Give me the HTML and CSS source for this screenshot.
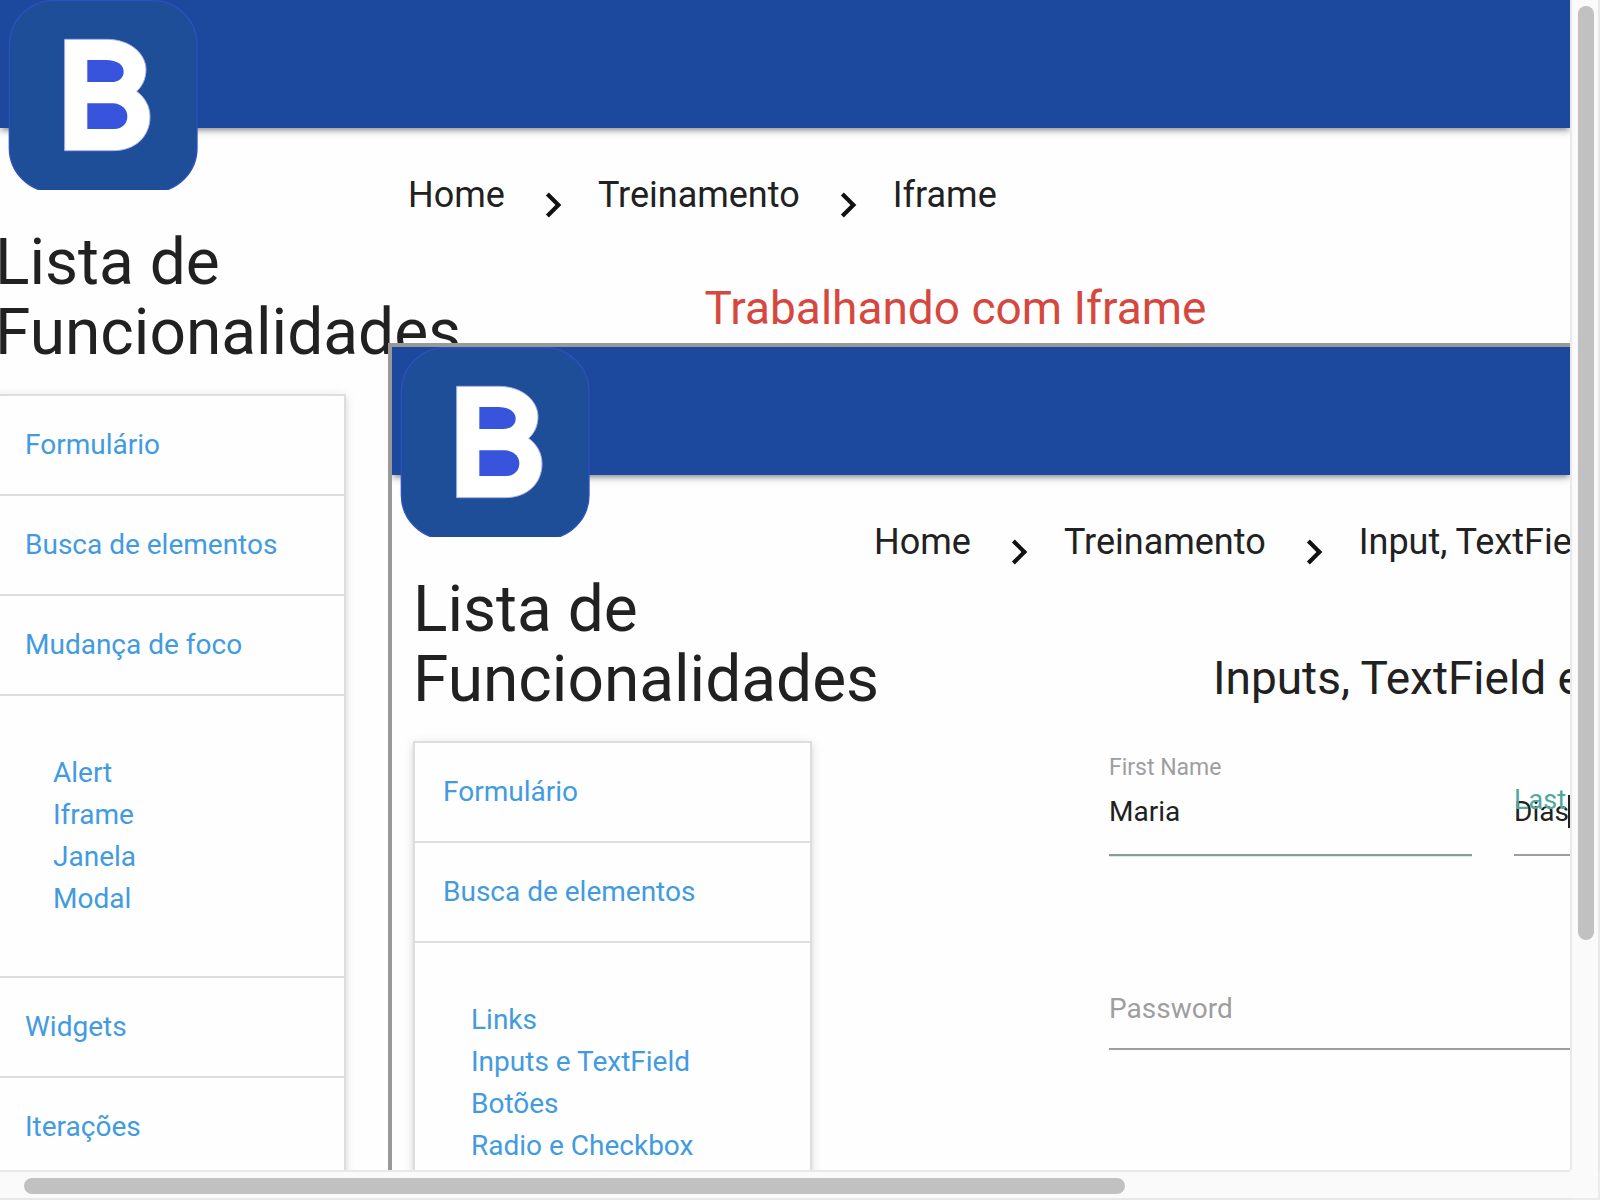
FILE: index.html
```html
<!DOCTYPE html>
<html lang="pt-BR">
<head>
<meta charset="utf-8">
<title>Treinamento - Iframe</title>
<link rel="stylesheet" href="styles.css">
</head>
<body>
<svg class="symbols" aria-hidden="true">
  <symbol id="logo" viewBox="24 0 570 570">
    <rect x="28" y="2" width="563" height="574" rx="132" fill="#1f4e99" stroke="#2c51be" stroke-width="4"/>
    <path d="M194 118H320C395 118 438 165 438 208C438 235 428 258 410 274C434 292 450 318 450 350C450 410 405 452 340 452H194Z" fill="#fff" stroke="#a9b0ee" stroke-width="3"/>
    <path d="M262 180H318C352 180 371 195 371 215C371 233 356 246 335 246H262Z" fill="#3853dc"/>
    <path d="M262 310H338C365 311 382 328 382 349C382 371 367 387 343 387H262Z" fill="#3853dc"/>
  </symbol>
  <symbol id="chevron" viewBox="0 0 24 24">
    <path d="M10 6L8.59 7.41 13.17 12l-4.58 4.59L10 18l6-6z" fill="#111"/>
  </symbol>
</svg>
<div class="window">
  <div class="viewport">
    <header class="topbar"><a href="#" aria-label="Início"><svg class="logo"><use href="#logo"/></svg></a></header>
    <div class="layout layout-outer">
      <aside class="sidebar">
        <h1 class="side-title">Lista de<br>Funcionalidades</h1>
        <ul class="menu">
          <li><a href="#">Formulário</a></li>
          <li><a href="#">Busca de elementos</a></li>
          <li><a href="#">Mudança de foco</a></li>
          <li>
            <ul class="submenu">
              <li><a href="#">Alert</a></li>
              <li><a href="#">Iframe</a></li>
              <li><a href="#">Janela</a></li>
              <li><a href="#">Modal</a></li>
            </ul>
          </li>
          <li><a href="#">Widgets</a></li>
          <li><a href="#">Iterações</a></li>
        </ul>
      </aside>
      <main class="content">
        <nav class="breadcrumb">
          <a href="#">Home</a>
          <svg class="chevron"><use href="#chevron"/></svg>
          <a href="#">Treinamento</a>
          <svg class="chevron"><use href="#chevron"/></svg>
          <a href="#">Iframe</a>
        </nav>
        <h2 class="title title-red">Trabalhando com Iframe</h2>
        <section class="frame">
          <header class="topbar"><a href="#" aria-label="Início"><svg class="logo"><use href="#logo"/></svg></a></header>
          <div class="layout layout-inner">
            <aside class="sidebar">
              <h1 class="side-title">Lista de<br>Funcionalidades</h1>
              <ul class="menu">
                <li><a href="#">Formulário</a></li>
                <li><a href="#">Busca de elementos</a></li>
                <li>
                  <ul class="submenu">
                    <li><a href="#">Links</a></li>
                    <li><a href="#">Inputs e TextField</a></li>
                    <li><a href="#">Botões</a></li>
                    <li><a href="#">Radio e Checkbox</a></li>
                  </ul>
                </li>
              </ul>
            </aside>
            <div class="content">
              <nav class="breadcrumb">
                <a href="#">Home</a>
                <svg class="chevron"><use href="#chevron"/></svg>
                <a href="#">Treinamento</a>
                <svg class="chevron"><use href="#chevron"/></svg>
                <a href="#">Input, TextField</a>
              </nav>
              <form class="form">
                <h2 class="title">Inputs, TextField e</h2>
                <div class="field field-valid">
                  <input id="first" type="text" value="Maria">
                  <label class="raised" for="first">First Name</label>
                </div>
                <div class="field">
                  <input id="last" type="text" value="Dias">
                  <label class="rising" for="last">Last</label>
                  <span class="caret"></span>
                </div>
                <div class="field field-wide">
                  <input id="password" type="password">
                  <label for="password">Password</label>
                </div>
              </form>
            </div>
          </div>
        </section>
      </main>
    </div>
  </div>
  <div class="scroll scroll-y" aria-hidden="true"><div class="thumb"></div></div>
  <div class="scroll scroll-x" aria-hidden="true"><div class="thumb"></div></div>
  <div class="corner"></div>
</div>
</body>
</html>
```
FILE: styles.css
```css
* { box-sizing: border-box; }

body {
  margin: 0;
  font: 28px/42px Roboto, "Liberation Sans", sans-serif;
  color: #212121;
  background: #fefefe;
}

ul { margin: 0; padding: 0; list-style: none; }
a { color: inherit; text-decoration: none; }
.symbols { display: none; }

/* Window with its scroll bars */
.window {
  display: grid;
  grid-template: minmax(0, 1fr) 30px / minmax(0, 1fr) 30px;
  height: 100vh;
  overflow: hidden;
}
.viewport { overflow: hidden; }
.scroll { display: flex; background: #fafafa; border: 0 solid #e8e8e8; }
.scroll-y { flex-direction: column; border-width: 0 2px; padding: 6px 4px 0 6px; }
.scroll-x { border-width: 2px 0; padding: 6px 0 4px 24px; }
.thumb { border-radius: 8px; background: #c1c1c1; }
.scroll-y .thumb { height: 80.2%; }
.scroll-x .thumb { width: 71.2%; }
.corner { background: #fafafa; border: solid #ececec; border-width: 0 2px 2px 0; }

/* Top bar */
.topbar {
  height: 128px;
  padding-left: 8px;
  background: #1c499d;
  box-shadow: 0 4px 4px 0 rgba(0, 0, 0, .14), 0 6px 2px -4px rgba(0, 0, 0, .12), 0 2px 10px 0 rgba(0, 0, 0, .2);
}
.logo { display: block; width: 190px; height: 190px; }

/* Columns */
.layout { display: grid; }
.layout-outer {
  grid-template-columns: 351px minmax(0, 1fr);
  column-gap: 42px;
  margin-left: -5px;
}
.layout-inner {
  grid-template-columns: 399px max-content;
  column-gap: 62px;
  padding-left: 21px;
}

/* Side list */
.side-title {
  margin: 100px 0 26px;
  font-size: 64px;
  line-height: 70px;
  font-weight: 400;
  white-space: nowrap;
}
.menu {
  border: 2px solid #ddd;
  background: #fefefe;
  color: #429be0;
  box-shadow: 0 4px 4px 0 rgba(0, 0, 0, .07), 0 2px 10px 0 rgba(0, 0, 0, .12);
}
.menu > li { padding: 28px; }
.menu > li + li { border-top: 2px solid #ddd; }
.submenu { padding: 28px; }
.menu a { display: block; }

/* Breadcrumb and titles */
.breadcrumb {
  display: flex;
  align-items: flex-start;
  margin-top: 40px;
  font-size: 36px;
  line-height: 54px;
  white-space: nowrap;
}
.layout-outer > .content > .breadcrumb { padding-left: 20px; }
.chevron { flex: none; width: 50px; height: 50px; margin: 12px 20px 0 23px; }
.title {
  margin: 0;
  font-size: 46px;
  line-height: 50px;
  font-weight: 400;
  white-space: nowrap;
}
.title-red {
  margin: 53px 0 10px;
  padding-right: 47px;
  text-align: center;
  color: #d6483f;
}

/* Embedded page */
.frame {
  position: relative;
  min-height: 100vh;
  border: 4px solid #999;
  border-right: 0;
  background: #fefefe;
  overflow: hidden;
}

/* Form */
.form {
  display: grid;
  grid-template-columns: 363px 363px;
  column-gap: 42px;
  padding-left: 235px;
}
.form .title { grid-column: 1 / -1; margin: 76px 0 67px; padding-left: 104px; }
.field { position: relative; margin-bottom: 108px; }
.field-wide { grid-column: 1 / -1; }
.field input {
  display: block;
  width: 100%;
  height: 86px;
  padding: 0 0 2px;
  border: 0;
  border-bottom: 2px solid #9e9e9e;
  border-radius: 0;
  background: transparent;
  font: inherit;
  color: inherit;
  outline: 0;
}
.field-valid input { border-bottom-color: #80a098; box-shadow: 0 1px 0 0 #d8ebe7; }
.field label { position: absolute; top: 24px; left: 0; color: #9e9e9e; }
.field .raised { top: -23px; font-size: 23px; }
.field .rising { top: 9px; font-size: 27px; color: #4fa99c; }
.caret { position: absolute; top: 25px; left: 54px; width: 2px; height: 33px; background: #212121; }
```
